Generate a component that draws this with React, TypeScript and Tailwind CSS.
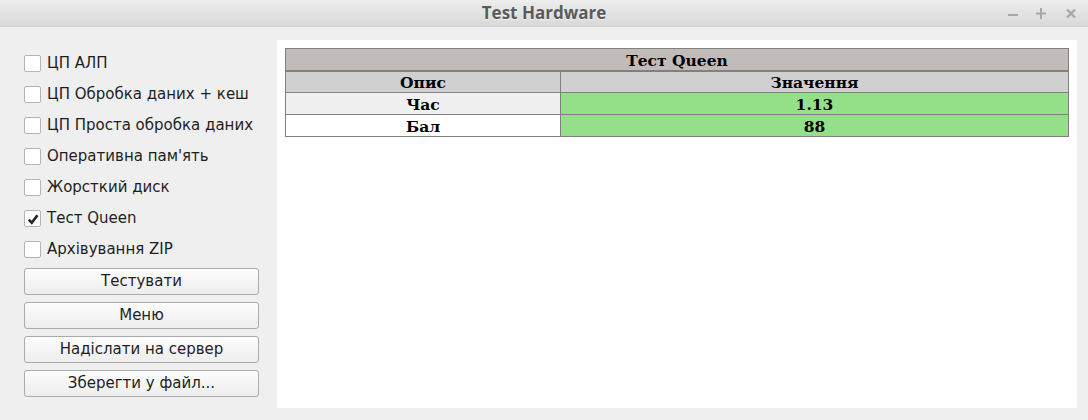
import React from "react";

const items: { label: string; checked: boolean }[] = [
  { label: "ЦП АЛП", checked: false },
  { label: "ЦП Обробка даних + кеш", checked: false },
  { label: "ЦП Проста обробка даних", checked: false },
  { label: "Оперативна пам'ять", checked: false },
  { label: "Жорсткий диск", checked: false },
  { label: "Тест Queen", checked: true },
  { label: "Архівування ZIP", checked: false },
];

const buttons = ["Тестувати", "Меню", "Надіслати на сервер", "Зберегти у файл..."];

function Checkbox({ checked }: { checked: boolean }) {
  return (
    <div className="w-[17px] h-[17px] rounded-[2px] border border-[#b4b4b4] bg-white flex items-center justify-center shrink-0">
      {checked && (
        <svg width="12" height="12" viewBox="0 0 12 12">
          <path d="M1.8 6.6 L4.8 9.8 L10.4 2.2" fill="none" stroke="#222" strokeWidth="2.6" strokeLinejoin="miter" />
        </svg>
      )}
    </div>
  );
}

export default function App() {
  return (
    <div className="w-[1088px] h-[420px] bg-[#efefef] flex flex-col overflow-hidden" style={{ fontFamily: "'DejaVu Sans', sans-serif" }}>
      <div className="h-[27px] shrink-0 bg-gradient-to-b from-[#ededed] to-[#d9d9d9] border-b border-[#d0d0d0] relative flex items-center justify-center">
        <span className="text-[17px] font-bold text-[#5a5a5a] [text-shadow:0_1px_0_#f4f4f4]" style={{ fontFamily: "'Open Sans', sans-serif" }}>
          Test Hardware
        </span>
        <div className="absolute right-[11px] top-0 h-[27px] flex items-center">
          <svg width="10" height="12" viewBox="0 0 10 12">
            <rect x="0" y="6" width="10" height="2" fill="#a8a8a8" />
          </svg>
          <svg width="10" height="11" viewBox="0 0 10 11" className="ml-[18px]">
            <rect x="0" y="4.5" width="10" height="2" fill="#a8a8a8" />
            <rect x="4" y="0" width="2" height="11" fill="#a8a8a8" />
          </svg>
          <svg width="12" height="11" viewBox="0 0 12 11" className="ml-[19px]">
            <path d="M2 1.5 L10 9.5 M10 1.5 L2 9.5" stroke="#a8a8a8" strokeWidth="2.4" />
          </svg>
        </div>
      </div>
      <div className="flex-1 flex pt-[13px] pr-[11px] pb-[12px] pl-[24px] gap-[18px]">
        <div className="w-[235px] shrink-0 flex flex-col pt-[8px]">
          {items.map((it) => (
            <div key={it.label} className="h-[31px] flex items-center gap-[6px]">
              <Checkbox checked={it.checked} />
              <span className="text-[15px] text-[#1e1e1e] leading-none">{it.label}</span>
            </div>
          ))}
          <div className="flex flex-col gap-[7px] mt-[3px]">
            {buttons.map((b) => (
              <div
                key={b}
                className="h-[27px] rounded-[3px] border border-[#ababab] bg-gradient-to-b from-[#fdfdfd] to-[#ededed] flex items-center justify-center text-[15px] text-[#1e1e1e]"
              >
                {b}
              </div>
            ))}
          </div>
        </div>
        <div className="flex-1 bg-white p-[8px]">
          <table
            className="w-full border-collapse text-[15.5px] font-bold text-black"
            style={{ fontFamily: "'DejaVu Serif', serif" }}
          >
            <thead>
              <tr className="h-[22px]">
                <th colSpan={2} className="bg-[#c1bbba] border border-[#808080] border-b-2 pt-[2px] pb-0 px-0 leading-none font-bold">
                  Тест Queen
                </th>
              </tr>
              <tr className="h-[22px]">
                <th className="w-[275px] bg-[#d0d0d0] border border-[#808080] pt-[2px] pb-0 px-0 leading-none font-bold">Опис</th>
                <th className="bg-[#d0d0d0] border border-[#808080] pt-[2px] pb-0 px-0 leading-none font-bold">Значення</th>
              </tr>
            </thead>
            <tbody>
              <tr className="h-[22px]">
                <td className="bg-[#f0f0f0] border border-[#808080] pt-[2px] pb-0 px-0 text-center leading-none">Час</td>
                <td className="bg-[#94e088] border border-[#808080] pt-[2px] pb-0 px-0 text-center leading-none">1.13</td>
              </tr>
              <tr className="h-[22px]">
                <td className="bg-white border border-[#808080] pt-[2px] pb-0 px-0 text-center leading-none">Бал</td>
                <td className="bg-[#94e088] border border-[#808080] pt-[2px] pb-0 px-0 text-center leading-none">88</td>
              </tr>
            </tbody>
          </table>
        </div>
      </div>
    </div>
  );
}
